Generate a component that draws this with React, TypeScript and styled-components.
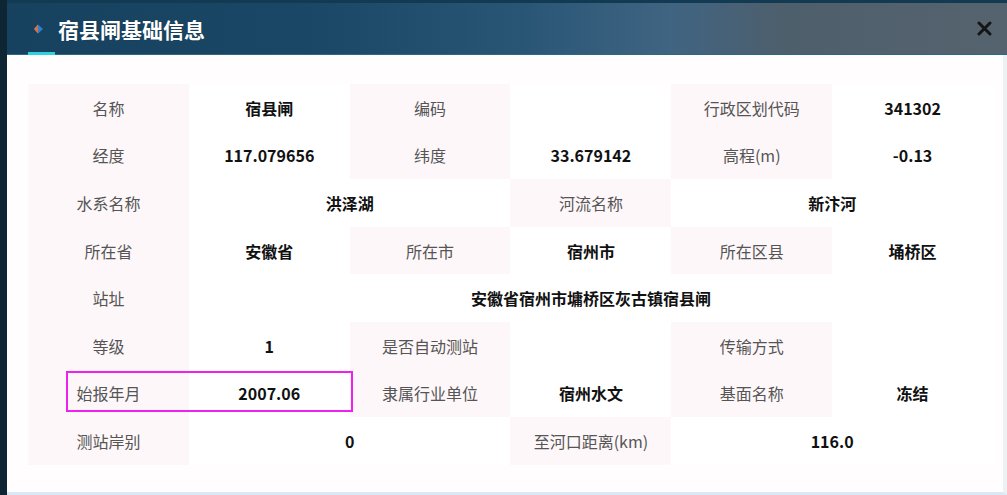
import React from "react";
import styled, { createGlobalStyle } from "styled-components";

const Global = createGlobalStyle`
  html, body { margin: 0; padding: 0; background: #ffffff; }
  body { font-family: "Noto Sans CJK SC", "Noto Sans", sans-serif; }
  * { box-sizing: border-box; }
`;

const Window = styled.div`
  width: 1007px;
  height: 495px;
  display: flex;
  flex-direction: column;
  border-left: 7px solid #0e2634;
  background: #ffffff;
  overflow: hidden;
`;

const Header = styled.div`
  position: relative;
  height: 55px;
  flex: none;
  display: flex;
  align-items: center;
  padding: 0 14px 0 24px;
  background: linear-gradient(90deg, #164260 0%, #1b4766 30%, #2a5676 52%, #3f6482 66%, #4e5f6c 78%, #55636e 100%);
  border-top: 3px solid #123a52;
  border-bottom: 1px solid #2a6a86;
`;

const Accent = styled.div`
  position: absolute;
  left: 21px;
  bottom: -1px;
  width: 27px;
  height: 3px;
  background: #2fd3e0;
`;

const Title = styled.h1`
  margin: 0 0 0 13px;
  font-size: 21px;
  font-weight: 700;
  color: #ffffff;
  flex: 1;
  text-shadow: 0 0 1px rgba(0, 0, 0, 0.4);
`;

const CloseButton = styled.button`
  border: none;
  background: none;
  padding: 0;
  width: 18px;
  height: 18px;
  display: flex;
  align-items: center;
  justify-content: center;
  cursor: pointer;
`;

const Body = styled.div`
  flex: 1;
  padding: 29px 14px 0 21px;
  background: #fffdfd;
  border-bottom: 3px solid #dbe9f6;
  border-right: 4px solid #eef1f4;
`;

const Table = styled.div`
  position: relative;
  display: grid;
  grid-template-columns: repeat(6, 1fr);
  grid-auto-rows: 47.6px;
  width: 965px;
`;

const Cell = styled.div<{ $span?: number; $label?: boolean }>`
  grid-column: span ${(p) => p.$span ?? 1};
  display: flex;
  align-items: center;
  justify-content: center;
  font-size: 16px;
  background: ${(p) => (p.$label ? "#fdf7f9" : "#ffffff")};
  color: ${(p) => (p.$label ? "#555555" : "#111111")};
  font-weight: ${(p) => (p.$label ? 400 : 700)};
`;

const Highlight = styled.div`
  position: absolute;
  left: 38px;
  top: 287px;
  width: 287px;
  height: 41px;
  border: 2px solid #ee22ee;
  pointer-events: none;
`;

const Dot = () => (
  <svg width="14" height="12" viewBox="0 0 14 12">
    <path d="M3 6 L7 1.5 L12 6 L7 10.5 Z" fill="#2f7fd0" />
    <path d="M3 6 L7 1.5 L7 10.5 Z" fill="#e0703a" />
  </svg>
);

type C = { t: string; l?: boolean; s?: number };
const rows: C[][] = [
  [{ t: "名称", l: true }, { t: "宿县闸" }, { t: "编码", l: true }, { t: "" }, { t: "行政区划代码", l: true }, { t: "341302" }],
  [{ t: "经度", l: true }, { t: "117.079656" }, { t: "纬度", l: true }, { t: "33.679142" }, { t: "高程(m)", l: true }, { t: "-0.13" }],
  [{ t: "水系名称", l: true }, { t: "洪泽湖", s: 2 }, { t: "河流名称", l: true }, { t: "新汴河", s: 2 }],
  [{ t: "所在省", l: true }, { t: "安徽省" }, { t: "所在市", l: true }, { t: "宿州市" }, { t: "所在区县", l: true }, { t: "埇桥区" }],
  [{ t: "站址", l: true }, { t: "安徽省宿州市墉桥区灰古镇宿县闸", s: 5 }],
  [{ t: "等级", l: true }, { t: "1" }, { t: "是否自动测站", l: true }, { t: "" }, { t: "传输方式", l: true }, { t: "" }],
  [{ t: "始报年月", l: true }, { t: "2007.06" }, { t: "隶属行业单位", l: true }, { t: "宿州水文" }, { t: "基面名称", l: true }, { t: "冻结" }],
  [{ t: "测站岸别", l: true }, { t: "0", s: 2 }, { t: "至河口距离(km)", l: true }, { t: "116.0", s: 2 }],
];

export default function App() {
  return (
    <>
      <Global />
      <Window>
        <Header>
          <Dot />
          <Title>宿县闸基础信息</Title>
          <CloseButton aria-label="关闭">
            <svg width="15" height="15" viewBox="0 0 15 15">
              <path d="M2 2 L13 13 M13 2 L2 13" stroke="#151515" strokeWidth="3" strokeLinecap="round" />
            </svg>
          </CloseButton>
          <Accent />
        </Header>
        <Body>
          <Table>
            {rows.map((r, i) =>
              r.map((c, j) => (
                <Cell key={`${i}-${j}`} $label={c.l} $span={c.s}>
                  {c.t}
                </Cell>
              ))
            )}
            <Highlight />
          </Table>
        </Body>
      </Window>
    </>
  );
}
